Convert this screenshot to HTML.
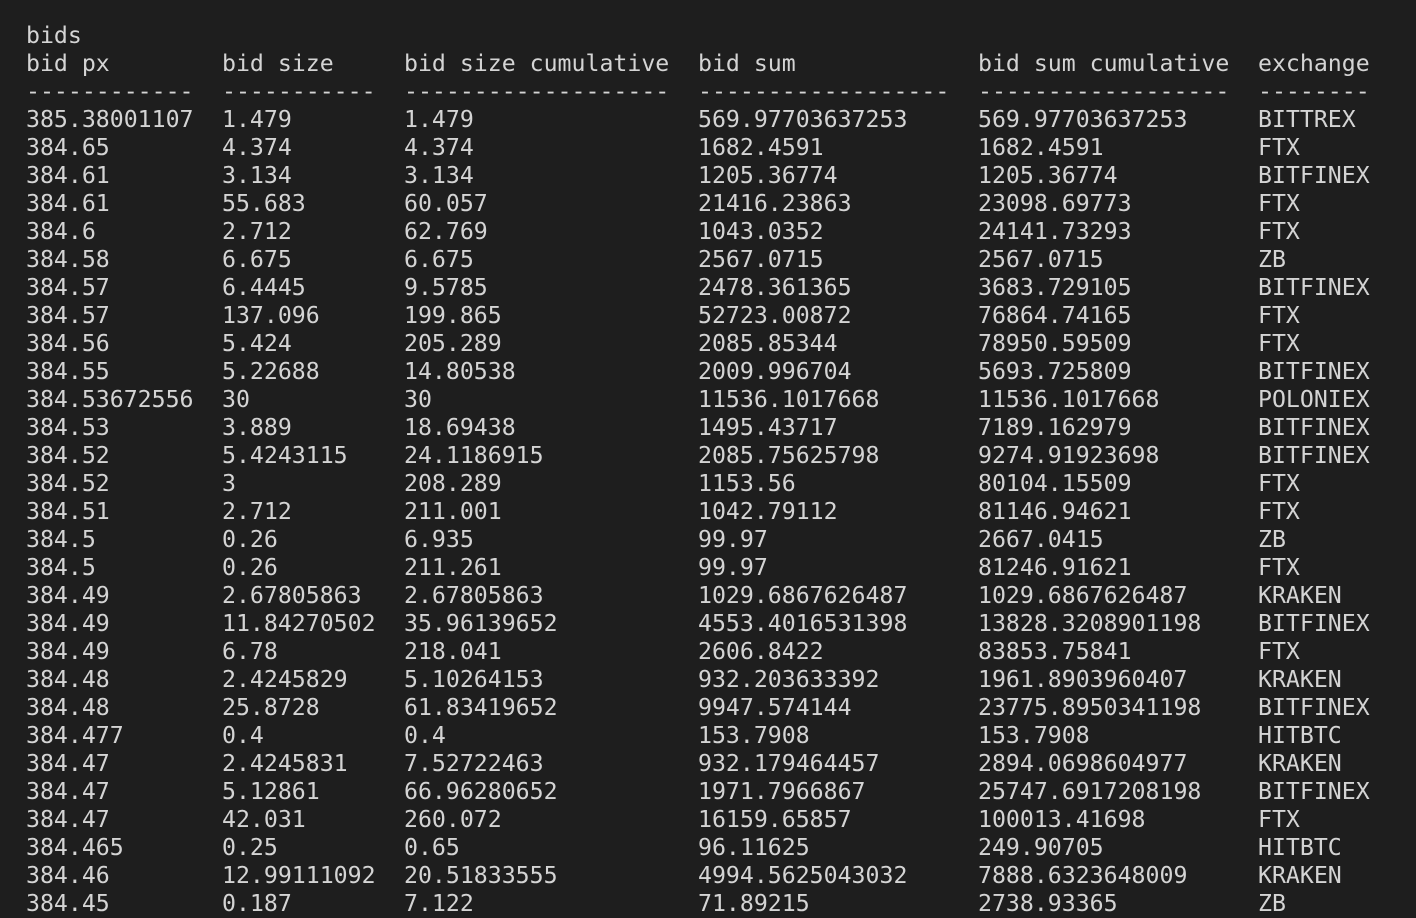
<!DOCTYPE html>
<html><head><meta charset="utf-8"><style>
html,body{margin:0;padding:0;background:#1e1e1e;width:1416px;height:896px;overflow:hidden}
#t{position:absolute;left:26px;top:22px;font-family:"DejaVu Sans Mono","Liberation Mono",monospace;font-size:23.2px;color:#d4d4d4}
.r{height:28px;line-height:28px;white-space:pre;position:relative}
.r span{position:absolute;top:0}
.r span:nth-child(1){left:0}.r span:nth-child(2){left:196px}.r span:nth-child(3){left:378px}
.r span:nth-child(4){left:672px}.r span:nth-child(5){left:952px}.r span:nth-child(6){left:1232px}
</style></head><body><div id="t">
<div class="r">bids</div>
<div class="r"><span>bid px</span><span>bid size</span><span>bid size cumulative</span><span>bid sum</span><span>bid sum cumulative</span><span>exchange</span></div>
<div class="r"><span>------------</span><span>-----------</span><span>-------------------</span><span>------------------</span><span>------------------</span><span>--------</span></div>
<div class="r"><span>385.38001107</span><span>1.479</span><span>1.479</span><span>569.97703637253</span><span>569.97703637253</span><span>BITTREX</span></div>
<div class="r"><span>384.65</span><span>4.374</span><span>4.374</span><span>1682.4591</span><span>1682.4591</span><span>FTX</span></div>
<div class="r"><span>384.61</span><span>3.134</span><span>3.134</span><span>1205.36774</span><span>1205.36774</span><span>BITFINEX</span></div>
<div class="r"><span>384.61</span><span>55.683</span><span>60.057</span><span>21416.23863</span><span>23098.69773</span><span>FTX</span></div>
<div class="r"><span>384.6</span><span>2.712</span><span>62.769</span><span>1043.0352</span><span>24141.73293</span><span>FTX</span></div>
<div class="r"><span>384.58</span><span>6.675</span><span>6.675</span><span>2567.0715</span><span>2567.0715</span><span>ZB</span></div>
<div class="r"><span>384.57</span><span>6.4445</span><span>9.5785</span><span>2478.361365</span><span>3683.729105</span><span>BITFINEX</span></div>
<div class="r"><span>384.57</span><span>137.096</span><span>199.865</span><span>52723.00872</span><span>76864.74165</span><span>FTX</span></div>
<div class="r"><span>384.56</span><span>5.424</span><span>205.289</span><span>2085.85344</span><span>78950.59509</span><span>FTX</span></div>
<div class="r"><span>384.55</span><span>5.22688</span><span>14.80538</span><span>2009.996704</span><span>5693.725809</span><span>BITFINEX</span></div>
<div class="r"><span>384.53672556</span><span>30</span><span>30</span><span>11536.1017668</span><span>11536.1017668</span><span>POLONIEX</span></div>
<div class="r"><span>384.53</span><span>3.889</span><span>18.69438</span><span>1495.43717</span><span>7189.162979</span><span>BITFINEX</span></div>
<div class="r"><span>384.52</span><span>5.4243115</span><span>24.1186915</span><span>2085.75625798</span><span>9274.91923698</span><span>BITFINEX</span></div>
<div class="r"><span>384.52</span><span>3</span><span>208.289</span><span>1153.56</span><span>80104.15509</span><span>FTX</span></div>
<div class="r"><span>384.51</span><span>2.712</span><span>211.001</span><span>1042.79112</span><span>81146.94621</span><span>FTX</span></div>
<div class="r"><span>384.5</span><span>0.26</span><span>6.935</span><span>99.97</span><span>2667.0415</span><span>ZB</span></div>
<div class="r"><span>384.5</span><span>0.26</span><span>211.261</span><span>99.97</span><span>81246.91621</span><span>FTX</span></div>
<div class="r"><span>384.49</span><span>2.67805863</span><span>2.67805863</span><span>1029.6867626487</span><span>1029.6867626487</span><span>KRAKEN</span></div>
<div class="r"><span>384.49</span><span>11.84270502</span><span>35.96139652</span><span>4553.4016531398</span><span>13828.3208901198</span><span>BITFINEX</span></div>
<div class="r"><span>384.49</span><span>6.78</span><span>218.041</span><span>2606.8422</span><span>83853.75841</span><span>FTX</span></div>
<div class="r"><span>384.48</span><span>2.4245829</span><span>5.10264153</span><span>932.203633392</span><span>1961.8903960407</span><span>KRAKEN</span></div>
<div class="r"><span>384.48</span><span>25.8728</span><span>61.83419652</span><span>9947.574144</span><span>23775.8950341198</span><span>BITFINEX</span></div>
<div class="r"><span>384.477</span><span>0.4</span><span>0.4</span><span>153.7908</span><span>153.7908</span><span>HITBTC</span></div>
<div class="r"><span>384.47</span><span>2.4245831</span><span>7.52722463</span><span>932.179464457</span><span>2894.0698604977</span><span>KRAKEN</span></div>
<div class="r"><span>384.47</span><span>5.12861</span><span>66.96280652</span><span>1971.7966867</span><span>25747.6917208198</span><span>BITFINEX</span></div>
<div class="r"><span>384.47</span><span>42.031</span><span>260.072</span><span>16159.65857</span><span>100013.41698</span><span>FTX</span></div>
<div class="r"><span>384.465</span><span>0.25</span><span>0.65</span><span>96.11625</span><span>249.90705</span><span>HITBTC</span></div>
<div class="r"><span>384.46</span><span>12.99111092</span><span>20.51833555</span><span>4994.5625043032</span><span>7888.6323648009</span><span>KRAKEN</span></div>
<div class="r"><span>384.45</span><span>0.187</span><span>7.122</span><span>71.89215</span><span>2738.93365</span><span>ZB</span></div>
</div></body></html>
